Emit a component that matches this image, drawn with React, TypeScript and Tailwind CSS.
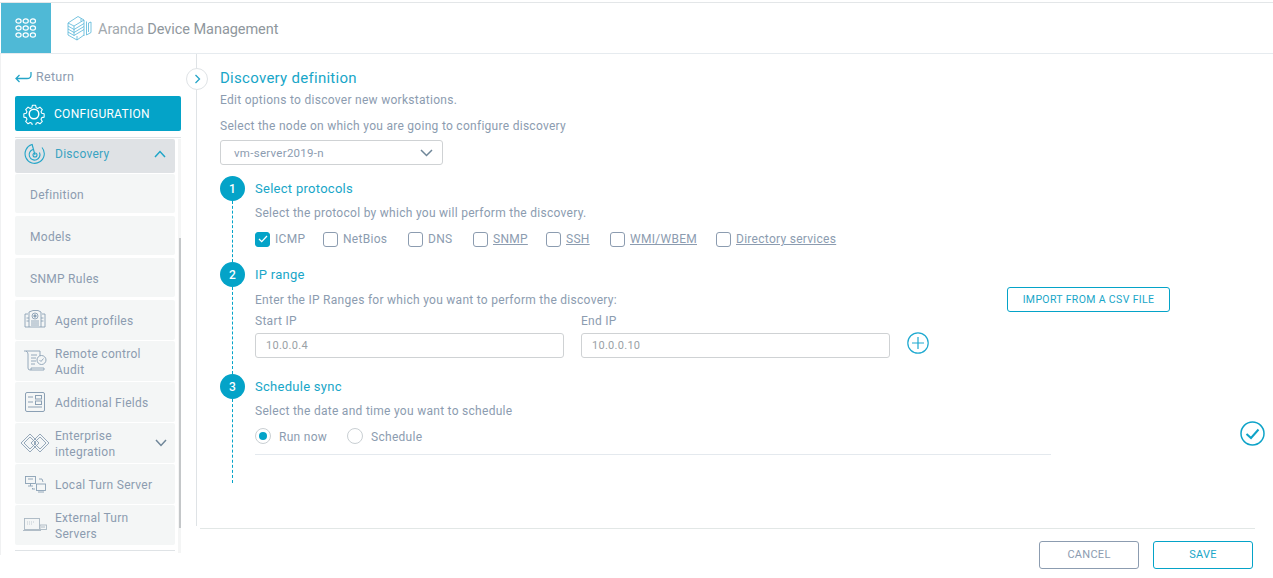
import React from "react";

const font = { fontFamily: '"Roboto", "Liberation Sans", sans-serif' };

function Grid() {
  const c = [0, 1, 2];
  return (
    <svg width="22" height="22" viewBox="0 0 22 22" fill="none" stroke="#fff" strokeWidth="1.2">
      {c.map((y) => c.map((x) => <ellipse key={`${x}${y}`} cx={3.5 + x * 7.2} cy={4 + y * 7} rx="2.6" ry="2.1" />))}
    </svg>
  );
}

function Logo() {
  return (
    <svg width="25" height="26" viewBox="0 0 25 26" fill="none" stroke="#55b5d8" strokeWidth="0.8">
      <path d="M1 8 L11 1.5 L17 5 L7 11 Z" />
      <path d="M1 8 V11 L7 14.5 L17 8.5" />
      <path d="M1 11 V14 L7 17.5 L17 11.5" />
      <path d="M1 14 V17 L7 20.5 L17 14.5" />
      <path d="M1 17 V20 L10 25 L17 20" />
      <path d="M7 11 V20.5 M10 25 V21 M14 3.5 V6.5 M17 5 V21 M19.5 6.5 V20 M19.5 20 L24 17.5 V7 L21.5 8 V17" />
    </svg>
  );
}

function Gear({ className = "" }: { className?: string }) {
  return (
    <svg className={className} width="22" height="22" viewBox="0 0 24 24" fill="none" stroke="#fff" strokeWidth="1.3" strokeLinejoin="round">
      <path d="M10 1.5h4l.6 2.9 2 .9 2.6-1.6 2.9 2.9-1.6 2.6.9 2 2.9.6v4l-2.9.6-.9 2 1.6 2.6-2.9 2.9-2.6-1.6-2 .9-.6 2.9h-4l-.6-2.9-2-.9-2.6 1.6-2.9-2.9 1.6-2.6-.9-2-2.9-.6v-4l2.9-.6.9-2-1.6-2.6 2.9-2.9 2.6 1.6 2-.9z" transform="translate(1.2 1.2) scale(0.9)" />
      <circle cx="12" cy="12" r="5.2" strokeWidth="1.6" />
    </svg>
  );
}

function Radar() {
  return (
    <svg width="22" height="22" viewBox="0 0 22 22" fill="none" stroke="#25a5c8" strokeWidth="1.1">
      <path d="M8 1.5 A 9.6 9.6 0 1 0 18 4.5" />
      <path d="M9 6.5 A 5.4 5.4 0 1 0 15.5 9.5" />
      <circle cx="11" cy="12" r="2" />
      <path d="M11 12 L8 1" />
    </svg>
  );
}

const iconStroke = "#8ba0b4";

function AgentIcon() {
  return (
    <svg width="22" height="22" viewBox="0 0 22 22" fill="none" stroke={iconStroke} strokeWidth="0.9">
      <path d="M4 5 H1 V18 H21 V5 H18" />
      <path d="M5 18 V3 L9 1.5 H14 L17 3 V18" />
      <circle cx="11" cy="7" r="3" />
      <circle cx="11" cy="7" r="1.2" fill={iconStroke} />
      <path d="M7 12 H15 M7 14 H15 M7 16 H15 M2.5 9 H5 M17 9 H19.5 M2.5 12 H5 M17 12 H19.5" />
    </svg>
  );
}
function AuditIcon() {
  return (
    <svg width="24" height="22" viewBox="0 0 24 22" fill="none" stroke={iconStroke} strokeWidth="0.9">
      <path d="M1 1 H17 M3 1 Q5 2 5 4 V18 Q5 20 7 20 H21 V18 H8 V20" />
      <path d="M8 5 H14 M8 8 H13 M8 11 H13 M8 14 H12 M17 1 V6" />
      <circle cx="18.5" cy="10" r="4.5" />
      <path d="M16.5 10 L18 11.5 L20.5 8.5" />
    </svg>
  );
}
function FieldsIcon() {
  return (
    <svg width="20" height="20" viewBox="0 0 20 20" fill="none" stroke={iconStroke} strokeWidth="1">
      <rect x="0.5" y="0.5" width="19" height="19" rx="1.5" />
      <path d="M3 5 H8 M3 10 H8 M3 15 H17" strokeWidth="1.2" />
      <rect x="10.5" y="3.5" width="6" height="3.5" />
      <rect x="10.5" y="9" width="6" height="3.5" />
    </svg>
  );
}
function EnterpriseIcon() {
  return (
    <svg width="30" height="20" viewBox="0 0 30 20" fill="none" stroke={iconStroke} strokeWidth="0.9">
      <path d="M1 10 L10 1 L19 10 L10 19 Z" />
      <path d="M4 10 L10 4 L16 10 L10 16 Z" />
      <path d="M11 10 L20 1 L29 10 L20 19 Z" />
      <path d="M14 10 L20 4 L26 10 L20 16 Z" />
    </svg>
  );
}
function TurnIcon() {
  return (
    <svg width="21" height="17" viewBox="0 0 21 17" fill="none" stroke={iconStroke} strokeWidth="0.9">
      <rect x="0.5" y="0.5" width="10" height="7" />
      <path d="M3 3 H8 M3 10 H8 M5.5 7.5 V10" />
      <rect x="11.5" y="8" width="9" height="6.5" />
      <path d="M13 16 H19 M14 3 H17 L18 6 M7 13 H10 M7 13 L8 12" />
    </svg>
  );
}
function ExternalIcon() {
  return (
    <svg width="24" height="14" viewBox="0 0 24 14" fill="none" stroke="#a9b7c2" strokeWidth="0.9">
      <rect x="1.5" y="0.5" width="15" height="11" />
      <path d="M0 12.5 H18" />
      <path d="M4 4 H12 M4 6 H10" strokeDasharray="1 1" stroke="#bcc6ce" />
      <rect x="17" y="7" width="6.5" height="4.5" />
      <path d="M18 9 H22" />
    </svg>
  );
}

function Chevron({ up }: { up?: boolean }) {
  return (
    <svg width="12" height="8" viewBox="0 0 12 8" fill="none" stroke={up ? "#1ea5c8" : "#6f8699"} strokeWidth="1.5">
      <path d={up ? "M1 7 L6 1.5 L11 7" : "M1 1 L6 6.5 L11 1"} />
    </svg>
  );
}

function SubItem({ label }: { label: string }) {
  return (
    <div className="flex h-[39px] items-center rounded-[2px] bg-[#f4f6f6] pl-[15px] pt-[2px] text-[12px] text-[#8c9cb0]">{label}</div>
  );
}

function IconItem({ label, icon, right }: { label: React.ReactNode; icon: React.ReactNode; right?: React.ReactNode }) {
  return (
    <div className="flex h-[40px] items-center rounded-[2px] bg-[#f4f6f6] text-[12px] leading-[16px] text-[#8c9cb0]">
      <div className="flex w-[40px] shrink-0 justify-center">{icon}</div>
      <div className="flex-1 pt-[2px]">{label}</div>
      {right && <div className="mr-[8px]">{right}</div>}
    </div>
  );
}

function Sidebar() {
  return (
    <aside className="flex h-[501px] w-[196px] shrink-0 flex-col border-l border-[#f0f1f2]">
      <div className="ml-[14px] mt-[14px] flex h-[18px] items-center text-[12.5px] text-[#8c9cb0]">
        <svg className="mr-[4px]" width="17" height="12" viewBox="0 0 17 12" fill="none" stroke="#25a5c8" strokeWidth="1.3">
          <path d="M16 1 V4 Q16 7.5 12 7.5 H1 M4.5 4 L1 7.5 L4.5 11" />
        </svg>
        Return
      </div>
      <div className="ml-[14px] mt-[10px] flex h-[35px] w-[166px] shrink-0 items-center rounded-[2px] bg-[#04a3c8] pl-[8px] text-[12px] text-white">
        <Gear className="mr-[9px]" />
        <span className="pt-px">CONFIGURATION</span>
      </div>
      <div className="ml-[14px] mt-[6px] w-[166px] flex-1 overflow-hidden border-t border-[#dfe3e6] pt-px">
        <div className="flex gap-[3px]">
          <div className="flex w-[160px] shrink-0 flex-col">
            <div className="flex h-[34px] items-center rounded-[2px] bg-[#dfe2e5] pb-[4px] text-[12px] text-[#3aa3c2]">
              <div className="ml-[9px] mr-[9px]"><Radar /></div>
              <span className="flex-1">Discovery</span>
              <div className="mr-[9px]"><Chevron up /></div>
            </div>
            <div className="mt-px flex flex-col gap-[3px]">
              <SubItem label="Definition" />
              <SubItem label="Models" />
              <SubItem label="SNMP Rules" />
            </div>
            <div className="mt-[3px] flex flex-col gap-px">
              <IconItem label="Agent profiles" icon={<AgentIcon />} />
              <IconItem label={<>Remote control<br />Audit</>} icon={<AuditIcon />} />
              <IconItem label="Additional Fields" icon={<FieldsIcon />} />
              <IconItem label={<>Enterprise<br />integration</>} icon={<EnterpriseIcon />} right={<Chevron />} />
              <IconItem label="Local Turn Server" icon={<TurnIcon />} />
              <IconItem label={<>External Turn<br />Servers</>} icon={<ExternalIcon />} />
            </div>
            <div className="mt-[5px] border-t border-[#dfe3e6]" />
          </div>
          <div className="h-[414px] w-[3px] shrink-0 bg-[#f4f5f5]">
            <div className="ml-px mt-[99px] h-[290px] w-[2px] bg-[#c4c7c9]" />
          </div>
        </div>
      </div>
    </aside>
  );
}

function Check({ label, checked, link, width = "" }: { label: string; checked?: boolean; link?: boolean; width?: string }) {
  return (
    <div className={`flex items-center gap-[5px] ${width}`}>
      <div className={`flex h-[15px] w-[15px] shrink-0 items-center justify-center rounded-[3px] border ${checked ? "border-[#04a3c8] bg-[#04a3c8]" : "border-[#8c9cb0] bg-white"}`}>
        {checked && (
          <svg width="10" height="8" viewBox="0 0 10 8" fill="none" stroke="#fff" strokeWidth="1.3"><path d="M1 4 L3.7 6.6 L9 1" /></svg>
        )}
      </div>
      <span className={`whitespace-nowrap text-[12px] text-[#8c9cb0] ${link ? "underline" : ""}`}>{label}</span>
    </div>
  );
}

function Step({ n, title, line, children }: { n: number; title: string; line: string; children: React.ReactNode }) {
  return (
    <div className="flex">
      <div className="flex w-[25px] shrink-0 flex-col items-center">
        <div className="flex h-[25px] w-[25px] shrink-0 items-center justify-center rounded-full bg-[#04a3c8] text-[12px] font-medium text-white">{n}</div>
        <div className={`${line} border-l border-dashed border-[#04a3c8]`} />
      </div>
      <div className="ml-[10px] flex-1">
        <div className="flex h-[25px] items-center text-[13px] text-[#18a6c8]">{title}</div>
        {children}
      </div>
    </div>
  );
}

function Field({ label, value }: { label: string; value: string }) {
  return (
    <div className="w-[309px]">
      <div className="mt-px flex h-[16px] items-center text-[12px] text-[#8c9cb0]">{label}</div>
      <div className="mt-[4px] flex h-[25px] items-center rounded-[3px] border border-[#cfd2d4] pl-[10px] pt-[2px] text-[11px] text-[#9aa1a6]">{value}</div>
    </div>
  );
}

function Main() {
  return (
    <main className="relative flex h-[472px] flex-col border-l border-[#dfe3e6] pl-[23px]">
      <div className="absolute left-[-11px] top-[14px] flex h-[22px] w-[22px] items-center justify-center rounded-full border border-[#dfe3e6] bg-white">
        <svg width="7" height="10" viewBox="0 0 7 10" fill="none" stroke="#25a5c8" strokeWidth="1.3"><path d="M1.5 1 L5.5 5 L1.5 9" /></svg>
      </div>
      <h1 className="mt-[14px] flex h-[20px] items-center text-[15px] font-normal text-[#18a6c8]">Discovery definition</h1>
      <p className="mt-[4px] flex h-[16px] items-center text-[12px] text-[#8c9cb0]">Edit options to discover new workstations.</p>
      <p className="mt-[10px] flex h-[16px] items-center text-[12px] text-[#8c9cb0]">Select the node on which you are going to configure discovery</p>
      <div className="mt-[6px] flex h-[25px] w-[223px] items-center justify-between rounded-[3px] border border-[#cfd2d4] pl-[13px] pr-[9px] text-[11.5px] text-[#8c9cb0]">
        <span className="pt-[2px]">vm-server2019-n</span>
        <svg width="13" height="8" viewBox="0 0 13 8" fill="none" stroke="#6f8699" strokeWidth="1.5"><path d="M1 1 L6.5 6.5 L12 1" /></svg>
      </div>
      <div className="mt-[11px] flex flex-col">
        <div className="h-[86px]">
          <Step n={1} title="Select protocols" line="h-[61px]">
            <p className="mt-[4px] flex h-[16px] items-center text-[12px] text-[#8c9cb0]">Select the protocol by which you will perform the discovery.</p>
            <div className="mt-[9px] flex gap-[20px]">
              <Check label="ICMP" checked width="w-[48px]" />
              <Check label="NetBios" width="w-[65px]" />
              <Check label="DNS" width="w-[45px]" />
              <Check label="SNMP" link width="w-[53px]" />
              <Check label="SSH" link width="w-[44px]" />
              <Check label="WMI/WBEM" link width="w-[86px]" />
              <Check label="Directory services" link />
            </div>
          </Step>
        </div>
        <div className="h-[112px]">
          <Step n={2} title="IP range" line="h-[87px]">
            <div className="flex h-[25px] w-[915px] items-center justify-between">
              <p className="text-[12px] text-[#8c9cb0]">Enter the IP Ranges for which you want to perform the discovery:</p>
              <button className="flex h-[25px] w-[163px] items-center justify-center rounded-[3px] border border-[#04a3c8] pt-px text-[10.5px] tracking-[0.35px] text-[#18a6c8]">IMPORT FROM A CSV FILE</button>
            </div>
            <div className="flex items-end">
              <Field label="Start IP" value="10.0.0.4" />
              <div className="ml-[17px]"><Field label="End IP" value="10.0.0.10" /></div>
              <svg className="mb-[4px] ml-[17px]" width="22" height="22" viewBox="0 0 22 22" fill="none" stroke="#1ea9d0" strokeWidth="1.2">
                <circle cx="11" cy="11" r="10.2" />
                <path d="M11 5 V17 M5 11 H17" />
              </svg>
            </div>
          </Step>
        </div>
        <Step n={3} title="Schedule sync" line="h-[84px]">
          <div className="flex items-end">
            <div className="w-[796px]">
              <p className="mt-[4px] flex h-[16px] items-center text-[12px] text-[#8c9cb0]">Select the date and time you want to schedule</p>
              <div className="mt-[9px] flex h-[16px] items-center text-[12px] text-[#8c9cb0]">
                <div className="flex h-[16px] w-[16px] items-center justify-center rounded-full border border-[#c9cfd3]">
                  <div className="h-[8px] w-[8px] rounded-full bg-[#04a3c8]" />
                </div>
                <span className="ml-[8px] pt-px">Run now</span>
                <div className="ml-[20px] h-[16px] w-[16px] rounded-full border border-[#c9cfd3]" />
                <span className="ml-[8px] pt-px">Schedule</span>
              </div>
              <div className="mt-[10px] border-t border-[#e4e9ee]" />
            </div>
            <svg className="mb-[9px] ml-[189px]" width="25" height="25" viewBox="0 0 25 25" fill="none" stroke="#0ea3c8">
              <circle cx="12.5" cy="12.5" r="11.5" strokeWidth="1.5" />
              <path d="M6.5 13 L11 17 L18.5 8.5" strokeWidth="2" />
            </svg>
          </div>
        </Step>
      </div>
    </main>
  );
}

export default function App() {
  return (
    <div style={font} className="flex h-[578px] w-[1273px] flex-col overflow-hidden bg-white tracking-[0.28px]">
      <header className="mt-[2px] flex h-[52px] items-stretch border-y border-y-[#e3e6e8] border-b-[#e6ebef]">
        <div className="ml-px flex w-[50px] items-center justify-center bg-[#4fb9d6]"><Grid /></div>
        <div className="ml-[16px] flex items-center">
          <Logo />
          <span className="ml-[6px] pt-[3px] text-[14.5px] tracking-[-0.05px] text-[#a2a9ae]">Aranda <span className="text-[#8f979d]">Device Management</span></span>
        </div>
      </header>
      <div className="flex">
        <Sidebar />
        <div className="flex flex-1 flex-col">
          <Main />
          <footer className="ml-[4px] mr-[18px] mt-[2px] flex justify-end gap-[14px] border-t border-[#e2e7e6] pr-[2px] pt-[12px]">
            <button className="flex h-[28px] w-[100px] items-center justify-center rounded-[3px] border border-[#8c9cb0] pt-px text-[11px] text-[#8c9cb0]">CANCEL</button>
            <button className="flex h-[28px] w-[100px] items-center justify-center rounded-[3px] border border-[#04a3c8] pt-px text-[11px] text-[#18a6c8]">SAVE</button>
          </footer>
        </div>
      </div>
    </div>
  );
}
